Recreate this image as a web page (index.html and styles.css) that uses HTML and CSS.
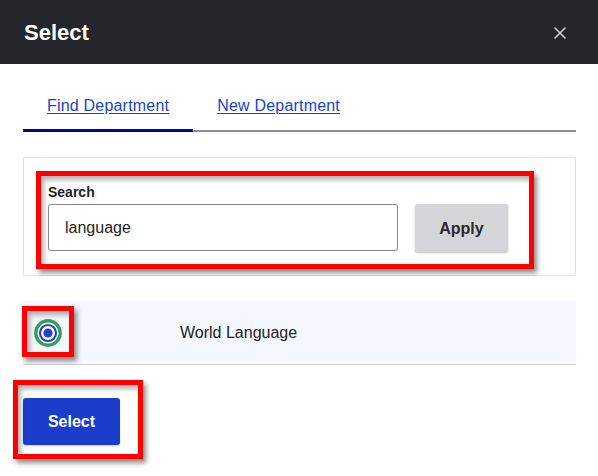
FILE: index.html
```html
<!DOCTYPE html>
<html lang="en">
<head>
<meta charset="utf-8">
<title>Select</title>
<link rel="stylesheet" href="styles.css">
</head>
<body>
<div class="modal">
  <header class="header">
    <h1 class="title">Select</h1>
    <button class="close" aria-label="Close">
      <svg width="12" height="12" viewBox="0 0 12 12"><path d="M1 1L11 11M11 1L1 11" stroke="#cfcfd2" stroke-width="1.6" stroke-linecap="round"/></svg>
    </button>
  </header>
  <main class="content">
    <nav class="tabs">
      <a class="tab active" href="#">Find Department</a>
      <a class="tab" href="#">New Department</a>
    </nav>
    <section class="search-card">
      <label class="search-label" for="q">Search</label>
      <div class="search-row">
        <input id="q" class="search-input" type="text" value="language">
        <button class="apply">Apply</button>
      </div>
    </section>
    <div class="result-row">
      <div class="radio-cell">
        <svg width="28" height="28" viewBox="0 0 28 28">
          <circle cx="14" cy="14" r="12.2" fill="#fff" stroke="#35a05c" stroke-width="3.4"/>
          <circle cx="14" cy="14" r="8" fill="none" stroke="#2141cf" stroke-width="2.2"/>
          <circle cx="14" cy="14" r="4.6" fill="#2141cf"/>
        </svg>
      </div>
      <div class="result-name">World Language</div>
    </div>
    <button class="select-btn">Select</button>
  </main>
  <div class="mark mark-search"></div>
  <div class="mark mark-radio"></div>
  <div class="mark mark-select"></div>
</div>
</body>
</html>
```
FILE: styles.css
```css
* { box-sizing: border-box; }
html, body { margin: 0; padding: 0; background: #fff; }
body {
  font-family: "Liberation Sans", Arial, sans-serif;
  color: #222;
  width: 598px;
  height: 476px;
  overflow: hidden;
}
.modal { position: relative; width: 598px; height: 476px; }
.header {
  height: 64px;
  background: #25262b;
  display: flex;
  align-items: center;
  justify-content: space-between;
  padding: 0 32px 0 24px;
}
.title {
  margin: 0;
  color: #fff;
  font-size: 22px;
  font-weight: bold;
  line-height: 25px;
}
.close {
  background: none;
  border: 0;
  padding: 0;
  width: 12px;
  height: 12px;
  display: flex;
  margin-top: 2px;
}
.content { padding: 0 22px 0 23px; }
.tabs {
  margin-top: 32px;
  display: flex;
  border-bottom: 2px solid #8f8f8f;
}
.tab {
  font-size: 16px;
  line-height: 20px;
  letter-spacing: 0.2px;
  color: #1c3fcf;
  text-decoration: underline;
  text-underline-offset: 2px;
  padding: 0 24px 13px;
  border-bottom: 3px solid transparent;
  margin-bottom: -2px;
}
.tab.active { border-bottom-color: #06068c; }
.search-card {
  margin-top: 25px;
  border: 1px solid #e2e2e4;
  padding: 26px 24px 23px;
}
.search-label {
  display: block;
  font-size: 14px;
  font-weight: bold;
  line-height: 16px;
  color: #222;
  margin-bottom: 4px;
}
.search-row { display: flex; align-items: flex-start; }
.search-input {
  width: 350px;
  height: 47px;
  border: 1px solid #8a8a8a;
  border-radius: 3px;
  padding: 1px 0 0 16px;
  font-family: "Liberation Sans", Arial, sans-serif;
  font-size: 16px;
  color: #222;
  outline: none;
}
.apply {
  margin-left: 17px;
  width: 93px;
  height: 48px;
  border: 0;
  border-radius: 2px;
  background: #d4d5d9;
  box-shadow: 0 1px 2px rgba(0,0,0,0.25);
  font-family: "Liberation Sans", Arial, sans-serif;
  font-size: 16px;
  font-weight: bold;
  color: #2a2a2d;
  padding-top: 2px;
}
.result-row {
  margin-top: 25px;
  height: 64px;
  background: #f4f7fe;
  border-bottom: 1px solid #d3d3db;
  display: flex;
  align-items: center;
}
.radio-cell { padding-left: 11px; display: flex; }
.result-name {
  margin-left: 118px;
  font-size: 16px;
  color: #222;
  padding-top: 1px;
}
.select-btn {
  margin-top: 33px;
  width: 97px;
  height: 47px;
  border: 0;
  border-radius: 3px;
  background: #1c3ccb;
  color: #fff;
  font-family: "Liberation Sans", Arial, sans-serif;
  font-size: 16px;
  font-weight: bold;
  padding-top: 2px;
  box-shadow: 0 1px 2px rgba(0,0,0,0.2);
}
.mark {
  position: absolute;
  border: 5px solid #ff0000;
  box-shadow: 3px 4px 5px rgba(0,0,0,0.45), inset 3px 4px 5px rgba(0,0,0,0.3);
  pointer-events: none;
}
.mark-search { left: 36px; top: 171px; width: 498px; height: 98px; }
.mark-radio { left: 22px; top: 306px; width: 52px; height: 51px; }
.mark-select { left: 13px; top: 380px; width: 130px; height: 79px; }
```
